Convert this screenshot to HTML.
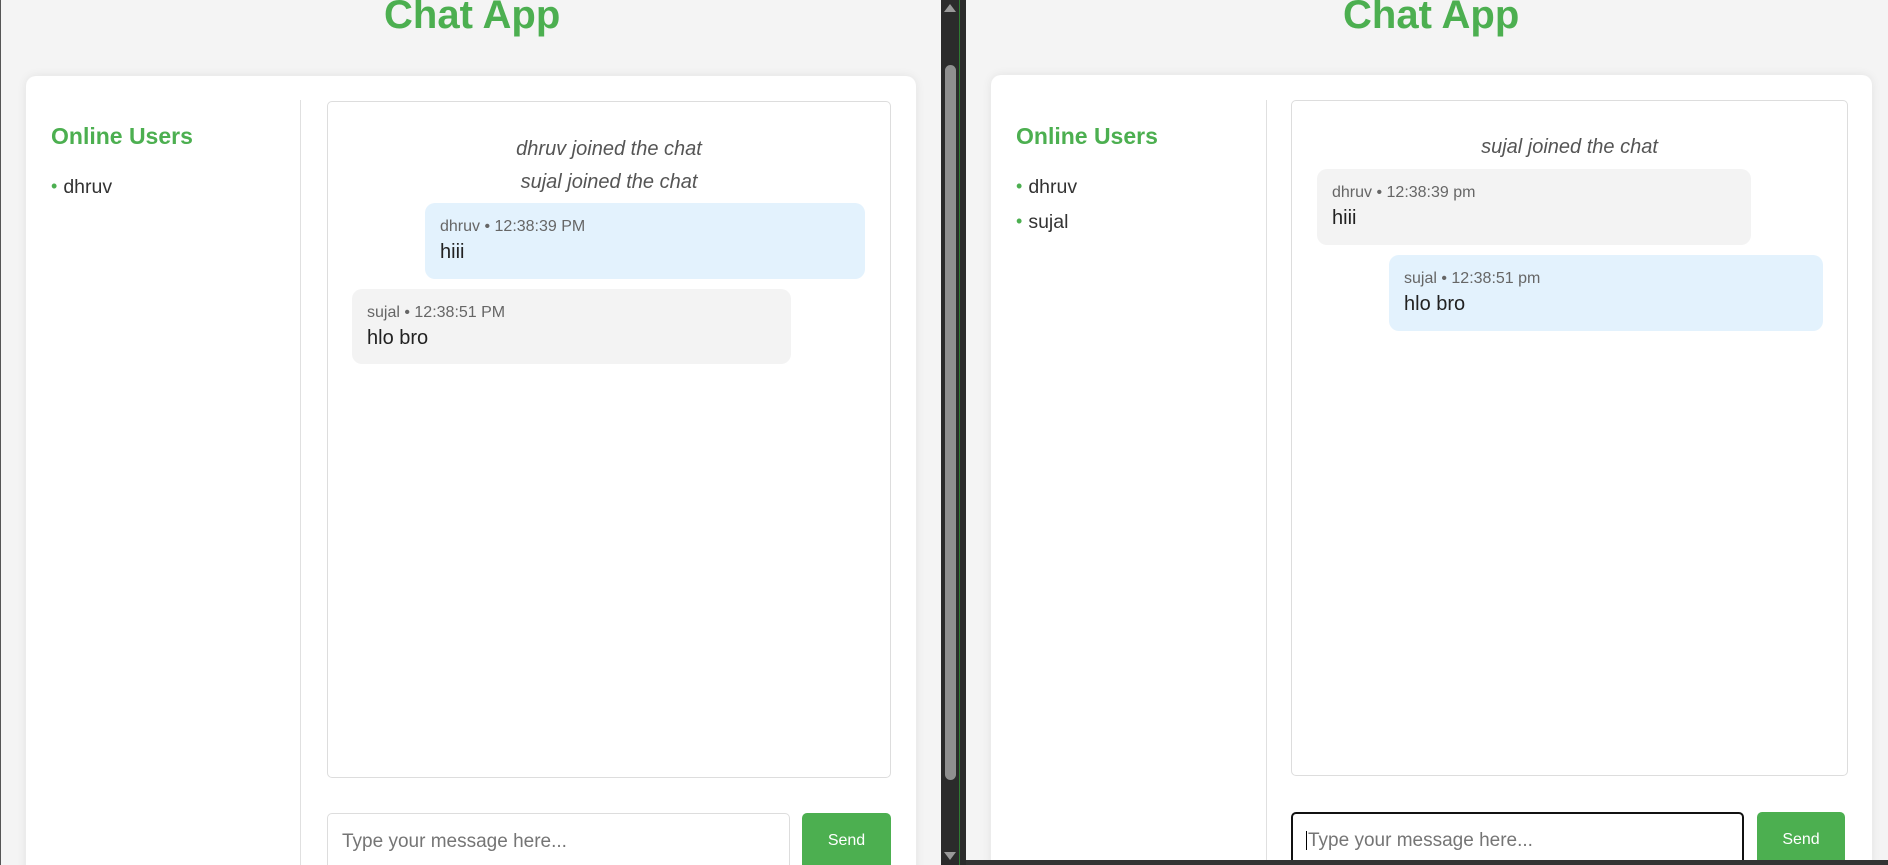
<!DOCTYPE html>
<html><head><meta charset="utf-8"><style>
*{margin:0;padding:0;box-sizing:border-box}
html,body{width:1888px;height:865px;overflow:hidden}
body{background:#f4f4f4;font-family:"Liberation Sans",sans-serif;position:relative}
#w{position:absolute;left:0;top:0;width:1888px;height:865px;overflow:hidden}
.a{position:absolute;white-space:nowrap;line-height:1}
.title{font-size:40px;font-weight:bold;color:#4caf50}
.card{position:absolute;background:#fff;border-radius:10px;box-shadow:0 0 10px rgba(0,0,0,.08)}
.div{position:absolute;width:1px;background:#e0e0e0}
.box{position:absolute;border:1px solid #ddd;border-radius:5px;background:#fff}
.ou{font-size:23px;font-weight:bold;color:#4caf50}
.u{font-size:19.5px;color:#333}
.u b{color:#4caf50;font-weight:normal;font-size:18px;position:relative;top:-1px;margin-right:6px}
.sys{font-size:20px;font-style:italic;color:#555;text-align:center}
.bub{position:absolute;border-radius:10px}
.me{background:#e3f2fd}.ot{background:#f3f3f3}
.meta{position:absolute;left:15px;top:16px;font-size:16px;color:#666;line-height:1;white-space:nowrap}
.msg{position:absolute;left:15px;top:39px;font-size:20px;color:#222;line-height:1;white-space:nowrap}
.inp{position:absolute;border:1px solid #ddd;border-radius:5px;background:#fff}
.ph{position:absolute;left:14px;top:18px;font-size:19px;color:#757575;line-height:1}
.btn{position:absolute;background:#4caf50;border-radius:5px;color:#fff;font-size:16px;text-align:center;line-height:56px}
</style></head><body><div id="w">
<div style="position:absolute;left:0;top:0;width:1px;height:865px;background:#555"></div>
<!-- left pane -->
<div class="a title" style="left:384px;top:-5px">Chat App</div>
<div class="card" style="left:26px;top:76px;width:890px;height:820px"></div>
<div class="div" style="left:300px;top:100px;height:765px"></div>
<div class="a ou" style="left:51px;top:125px">Online Users</div>
<div class="a u" style="left:51px;top:178px"><b>•</b>dhruv</div>
<div class="box" style="left:327px;top:101px;width:564px;height:677px"></div>
<div class="a sys" style="left:327px;width:564px;top:139px">dhruv joined the chat</div>
<div class="a sys" style="left:327px;width:564px;top:172px">sujal joined the chat</div>
<div class="bub me" style="left:425px;top:203px;width:440px;height:76px"><div class="meta">dhruv • 12:38:39 PM</div><div class="msg">hiii</div></div>
<div class="bub ot" style="left:352px;top:289px;width:439px;height:75px"><div class="meta">sujal • 12:38:51 PM</div><div class="msg">hlo bro</div></div>
<div class="inp" style="left:327px;top:813px;width:463px;height:70px"><div class="ph">Type your message here...</div></div>
<div class="btn" style="left:802px;top:813px;width:89px;height:60px">Send</div>
<!-- scrollbar -->
<div style="position:absolute;left:941px;top:0;width:25px;height:865px;background:#2b2b2b"></div>
<div style="position:absolute;left:945px;top:65px;width:11px;height:715px;background:#8f8f8f;border-radius:6px"></div>
<div style="position:absolute;left:944px;top:4px;width:0;height:0;border-left:6px solid transparent;border-right:6px solid transparent;border-bottom:8px solid #999"></div>
<div style="position:absolute;left:944px;top:852px;width:0;height:0;border-left:6px solid transparent;border-right:6px solid transparent;border-top:8px solid #999"></div>
<div style="position:absolute;left:959px;top:0;width:1px;height:865px;background:#2e7d32"></div>
<!-- right pane -->
<div style="position:absolute;left:966px;top:0;width:922px;height:860px;background:#f4f4f4;overflow:hidden">
<div class="a title" style="left:377px;top:-5px">Chat App</div>
<div class="card" style="left:25px;top:75px;width:881px;height:800px"></div>
<div class="div" style="left:300px;top:100px;height:760px"></div>
<div class="a ou" style="left:50px;top:125px">Online Users</div>
<div class="a u" style="left:50px;top:178px"><b>•</b>dhruv</div>
<div class="a u" style="left:50px;top:213px"><b>•</b>sujal</div>
<div class="box" style="left:325px;top:100px;width:557px;height:676px"></div>
<div class="a sys" style="left:325px;width:557px;top:137px">sujal joined the chat</div>
<div class="bub ot" style="left:351px;top:169px;width:434px;height:76px"><div class="meta">dhruv • 12:38:39 pm</div><div class="msg">hiii</div></div>
<div class="bub me" style="left:423px;top:255px;width:434px;height:76px"><div class="meta">sujal • 12:38:51 pm</div><div class="msg">hlo bro</div></div>
<div class="inp" style="left:325px;top:812px;width:453px;height:70px;border:2px solid #111"><div class="ph" style="left:13px;top:17px;border-left:1px solid #000;padding-left:1px">Type your message here...</div></div>
<div class="btn" style="left:791px;top:812px;width:88px;height:60px">Send</div>
</div>
<div style="position:absolute;left:966px;top:860px;width:922px;height:5px;background:#333"></div>
</div></body></html>
